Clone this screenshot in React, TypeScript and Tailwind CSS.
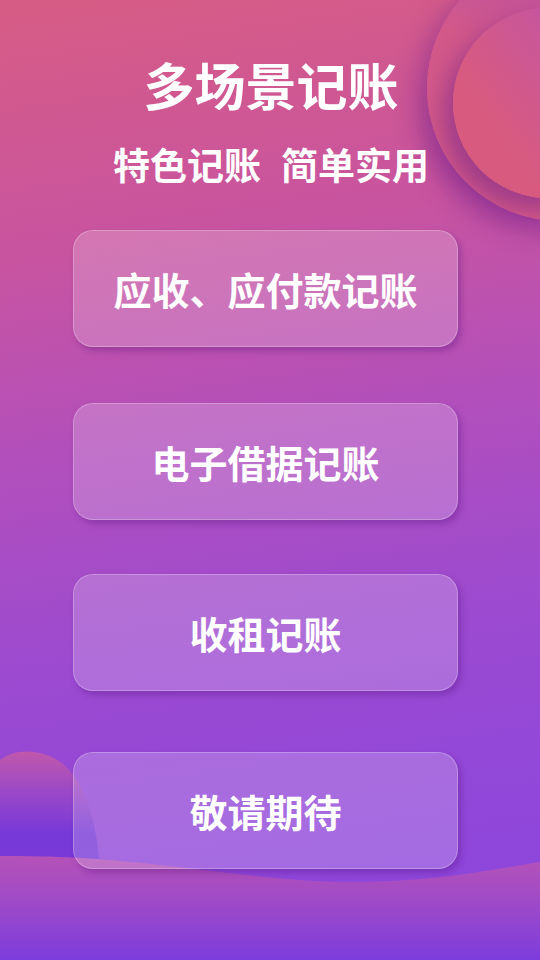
import React from "react";

const buttons = [
  { label: "应收、应付款记账", mt: "mt-[44px]" },
  { label: "电子借据记账", mt: "mt-[56px]" },
  { label: "收租记账", mt: "mt-[54px]" },
  { label: "敬请期待", mt: "mt-[61px]" },
];

export default function App() {
  return (
    <div
      className="relative w-[540px] h-[960px] overflow-hidden bg-[linear-gradient(172deg,#d75c84_0%,#c854a0_25%,#b24fbc_45%,#9c4ad0_65%,#9047da_85%,#8a44dc_100%)]"
      style={{ fontFamily: '"Noto Sans CJK SC", "Noto Sans", sans-serif' }}
    >
      {/* top-right circles */}
      <div className="absolute left-[427px] top-[-45px] w-[266px] h-[266px] rounded-full bg-[linear-gradient(200deg,#b050b0_0%,#d2588a_45%,#d45a86_100%)] shadow-[-10px_12px_24px_rgba(110,30,140,0.45)]" />
      <div className="absolute left-[453px] top-[8px] w-[190px] h-[190px] rounded-full bg-[linear-gradient(235deg,#9c4cc8_0%,#c8569a_35%,#d75a80_70%,#d85a7e_100%)] shadow-[-10px_12px_22px_rgba(110,30,140,0.5)]" />

      {/* bottom-left hill */}
      <svg className="absolute left-0 top-[740px]" width="120" height="140" viewBox="0 0 120 140">
        <defs>
          <linearGradient id="hill" x1="0" y1="0" x2="0" y2="1">
            <stop offset="0%" stopColor="#c058ac" />
            <stop offset="35%" stopColor="#9a48c8" />
            <stop offset="70%" stopColor="#7638d8" />
            <stop offset="100%" stopColor="#7a3ad8" />
          </linearGradient>
        </defs>
        <path d="M0,20 C12,10 34,8 54,18 C80,32 96,70 100,130 L0,130 Z" fill="url(#hill)" />
      </svg>

      {/* bottom wave */}
      <svg className="absolute left-0 bottom-0" width="540" height="112" viewBox="0 0 540 112">
        <defs>
          <linearGradient id="wave" x1="0" y1="0" x2="0" y2="1">
            <stop offset="0%" stopColor="#b552b8" />
            <stop offset="45%" stopColor="#9e4ac8" />
            <stop offset="100%" stopColor="#7c3cdc" />
          </linearGradient>
        </defs>
        <path d="M0,8 C140,6 250,34 350,34 C430,34 490,22 540,14 L540,112 L0,112 Z" fill="url(#wave)" />
      </svg>

      <div className="relative flex flex-col">
        <div className="mt-[55px] text-center text-white font-bold text-[51px] leading-[58px] pl-[2px]">
          多场景记账
        </div>
        <div className="mt-[29px] flex justify-center gap-[20px] text-white font-semibold text-[37px] leading-[44px] pl-[2px]">
          <span>特色记账</span>
          <span>简单实用</span>
        </div>
        <div className="flex flex-col pl-[73px] pr-[82px]">
          {buttons.map((b) => (
            <div
              key={b.label}
              className={`${b.mt} h-[117px] rounded-[20px] bg-white/20 border border-white/25 shadow-[3px_4px_6px_rgba(90,20,130,0.35)] flex items-center justify-center text-white font-semibold text-[38px]`}
            >
              {b.label}
            </div>
          ))}
        </div>
      </div>
    </div>
  );
}
